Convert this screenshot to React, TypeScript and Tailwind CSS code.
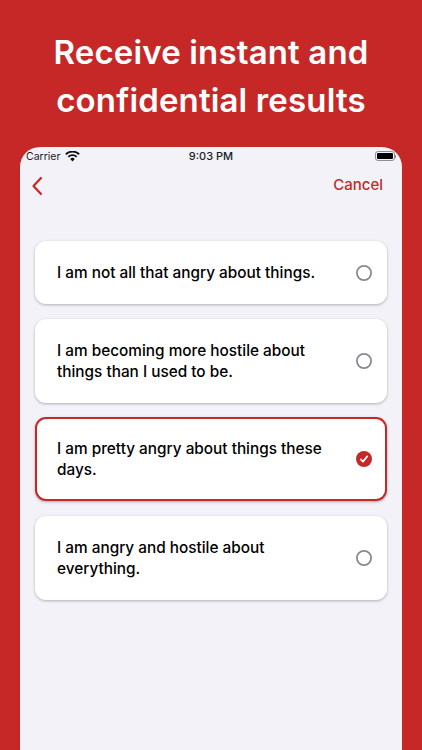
const RED = "#c62828";

const options = [
  { text: "I am not all that angry about things.", selected: false },
  { text: "I am becoming more hostile about things than I used to be.", selected: false },
  { text: "I am pretty angry about things these days.", selected: true },
  { text: "I am angry and hostile about everything.", selected: false },
];

function Radio({ selected }: { selected: boolean }) {
  if (selected) {
    return (
      <svg width="16" height="16" viewBox="0 0 16 16" className="shrink-0">
        <circle cx="8" cy="8" r="8" fill={RED} />
        <path d="M4.8 8.3 7 10.6 11.2 5.4" fill="none" stroke="#fff" strokeWidth="1.7" strokeLinecap="round" strokeLinejoin="round" />
      </svg>
    );
  }
  return (
    <svg width="16" height="16" viewBox="0 0 16 16" className="shrink-0">
      <circle cx="8" cy="8" r="7.1" fill="none" stroke="#8a8a8e" strokeWidth="1.8" />
    </svg>
  );
}

export default function App() {
  return (
    <div className="flex h-[750px] w-[422px] flex-col overflow-hidden bg-[#c62828] font-['Inter',sans-serif]">
      <h1 className="pt-[28px] text-center text-[33px] font-semibold leading-[48px] tracking-[0.15px] text-white">
        Receive instant and
        <br />
        confidential results
      </h1>
      <div className="mx-5 mt-[23px] flex-1 rounded-t-[20px] bg-[#f2f2f8]">
        <div className="relative flex h-[18px] items-center pl-[6px] pt-[1px] text-[10.5px] text-[#1c1c1e]">
          <span>Carrier</span>
          <svg width="15" height="11" viewBox="0 0 14 10" className="ml-[5px]">
            <path d="M7 9.6 4.9 7.3a3 3 0 0 1 4.2 0zM3.7 6 2.5 4.7a6.4 6.4 0 0 1 9 0L10.3 6a4.7 4.7 0 0 0-6.6 0zM1.4 3.6.2 2.3a9.7 9.7 0 0 1 13.6 0l-1.2 1.3a8 8 0 0 0-11.2 0z" fill="#111" />
          </svg>
          <span className="absolute left-1/2 -translate-x-1/2 text-[11px] font-medium">9:03 PM</span>
          <div className="absolute right-[6px] top-[4px] flex items-center">
            <div className="h-[10px] w-[20px] rounded-[3px] border border-[#8e8e93] bg-black bg-clip-content p-[1px]" />
            <div className="h-[3px] w-[1px] bg-[#8e8e93]" />
          </div>
        </div>
        <div className="flex h-[41px] items-center justify-between pl-[11px] pr-[19px]">
          <svg width="12" height="20" viewBox="0 0 12 20">
            <path d="M10 2 2.5 10 10 18" fill="none" stroke={RED} strokeWidth="2.2" strokeLinecap="round" strokeLinejoin="round" />
          </svg>
          <span className="text-[15px] font-medium text-[#c62828]">Cancel</span>
        </div>
        <div className="mt-[35px] flex flex-col gap-[14.5px] px-[15px]">
          {options.map((o) => (
            <div
              key={o.text}
              className={`flex items-center justify-between gap-3 rounded-[11px] bg-white shadow-[0_1px_3px_rgba(0,0,0,0.28)] ${
                o.selected ? "border-2 border-[#c62828] py-[19px] pl-[20px] pr-[13px]" : "py-[21px] pl-[22px] pr-[15px]"
              }`}
            >
              <p className="text-[15.35px] font-medium leading-[21px] text-black">{o.text}</p>
              <Radio selected={o.selected} />
            </div>
          ))}
        </div>
      </div>
    </div>
  );
}
